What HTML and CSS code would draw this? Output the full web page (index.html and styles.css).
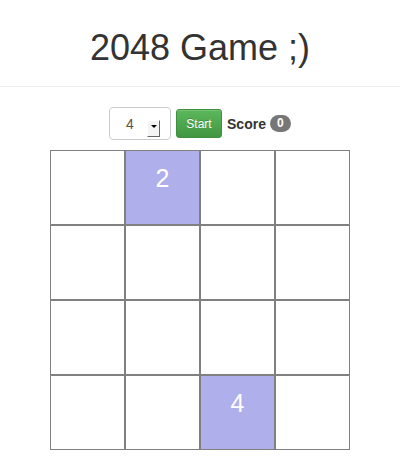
FILE: index.html
```html
<!DOCTYPE html>
<html>
<head>
<meta charset="utf-8">
<link rel="stylesheet" href="styles.css">
</head>
<body>
<div class="page">
  <h1 class="title">2048 Game ;)</h1>
  <div class="controls">
    <div class="select">
      <span class="select-value">4</span>
      <span class="select-arrow"><span class="tri"></span></span>
    </div>
    <button class="btn-start">Start</button>
    <span class="score">Score</span>
    <span class="badge">0</span>
  </div>
  <table class="board">
    <tr><td></td><td class="tile">2</td><td></td><td></td></tr>
    <tr><td></td><td></td><td></td><td></td></tr>
    <tr><td></td><td></td><td></td><td></td></tr>
    <tr><td></td><td></td><td class="tile">4</td><td></td></tr>
  </table>
</div>
</body>
</html>
```
FILE: styles.css
```css
html, body {
  margin: 0;
  padding: 0;
  background: #fff;
}
body {
  font-family: "Liberation Sans", Arial, sans-serif;
  color: #333;
}
.page {
  width: 400px;
  text-align: center;
}
.title {
  margin: 28px 0 0;
  padding-bottom: 18px;
  border-bottom: 1px solid #eee;
  font-size: 36px;
  font-weight: normal;
  line-height: 40px;
  color: #333;
}
.controls {
  margin-top: 20px;
  height: 33px;
  display: flex;
  justify-content: center;
  align-items: center;
}
.select {
  box-sizing: border-box;
  width: 62px;
  height: 33px;
  border: 1px solid #ccc;
  border-radius: 4px;
  display: flex;
  align-items: center;
  position: relative;
}
.select-value {
  margin-left: 16px;
  font-size: 14px;
  color: #5e5040;
}
.select-arrow {
  position: absolute;
  left: 37px;
  top: 12px;
  width: 13px;
  height: 17px;
  box-sizing: border-box;
  background: #f4f4f4;
  border-right: 1px solid #666;
  border-bottom: 1px solid #666;
  border-top: 1px solid #fff;
  border-left: 1px solid #fff;
}
.tri {
  position: absolute;
  left: 3px;
  top: 4px;
  width: 0;
  height: 0;
  border-left: 3px solid transparent;
  border-right: 3px solid transparent;
  border-top: 3px solid #000;
}
.btn-start {
  margin-left: 5px;
  box-sizing: border-box;
  width: 46px;
  height: 29px;
  padding: 0;
  border: 1px solid #3e8f3e;
  border-radius: 3px;
  background: linear-gradient(to bottom, #5cb85c 0%, #419641 100%);
  color: #fff;
  font-family: "Liberation Sans", Arial, sans-serif;
  font-size: 12px;
  text-shadow: 0 -1px 0 rgba(0,0,0,0.2);
  box-shadow: inset 0 1px 0 rgba(255,255,255,0.15);
}
.score {
  margin-left: 5px;
  font-size: 14px;
  font-weight: bold;
  color: #333;
}
.badge {
  margin-left: 4px;
  min-width: 21px;
  height: 17px;
  box-sizing: border-box;
  padding: 0 7px;
  border-radius: 9px;
  background: #777;
  color: #fff;
  font-size: 12px;
  font-weight: bold;
  line-height: 17px;
}
.board {
  margin: 10px 0 0 50px;
  border-collapse: separate;
  border-spacing: 0;
}
.board td {
  width: 73px;
  height: 73px;
  padding: 0;
  border: 1px solid #808080;
  vertical-align: top;
  text-align: center;
  font-size: 25px;
  line-height: 28px;
  color: #fff;
}
.board td.tile {
  background: #afafeb;
}
.board td.tile::before {
  content: "";
  display: block;
  height: 13px;
}
```
